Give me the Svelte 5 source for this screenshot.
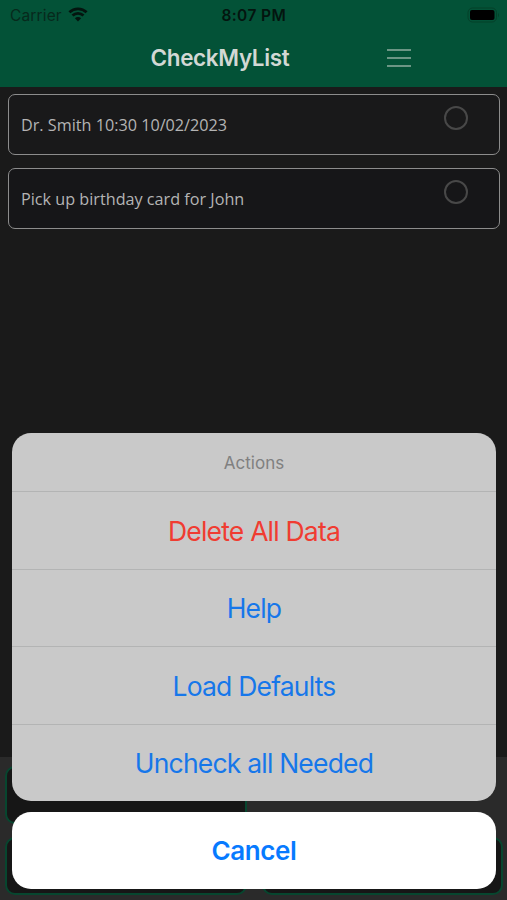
<script>
	let items = [
		{ text: 'Dr. Smith 10:30 10/02/2023', done: false },
		{ text: 'Pick up birthday card for John', done: false }
	];
	let actions = [
		{ label: 'Delete All Data', destructive: true },
		{ label: 'Help' },
		{ label: 'Load Defaults' },
		{ label: 'Uncheck all Needed' }
	];
	let open = true;

	function toggle(item) {
		item.done = !item.done;
		items = items;
	}
	function close() {
		open = false;
	}
</script>

<div class="phone">
	<header>
		<div class="status-bar">
			<div class="carrier">
				<span>Carrier</span>
				<svg class="wifi" viewBox="0 0 20 15" width="20" height="15">
					<path d="M1.4 5.3a12.4 12.4 0 0 1 17.2 0" />
					<path d="M4.5 8.5a8 8 0 0 1 11 0" />
					<path class="dot" d="M10 14.4 6.9 11.3a4.4 4.4 0 0 1 6.2 0z" />
				</svg>
			</div>
			<span class="time">8:07 PM</span>
			<svg class="battery" viewBox="0 0 34 16" width="34" height="16">
				<rect class="shell" x="1" y="1" width="28.5" height="14" rx="4.5" />
				<rect x="3" y="3" width="24.5" height="10" rx="2" />
				<path class="tip" d="M31 5.7q2 2.3 0 4.6z" />
			</svg>
		</div>
		<div class="nav-bar">
			<h1>CheckMyList</h1>
			<button class="menu" aria-label="Menu" on:click={() => (open = true)}>
				<i></i><i></i><i></i>
			</button>
		</div>
	</header>

	<ul role="list">
		{#each items as item}
			<li>
				<p>{item.text}</p>
				<button class="check" class:done={item.done} aria-label="Done" on:click={() => toggle(item)}
				></button>
			</li>
		{/each}
	</ul>

	<footer>
		<div class="pad"></div>
		<div></div>
		<div class="pad"></div>
		<div class="pad"></div>
	</footer>

	{#if open}
		<div class="sheet">
			<div class="actions">
				<h2>Actions</h2>
				{#each actions as action}
					<button class="action" class:destructive={action.destructive} on:click={close}>
						{action.label}
					</button>
				{/each}
			</div>
			<button class="cancel" on:click={close}>Cancel</button>
		</div>
	{/if}
</div>

<style>
	:global(body) {
		background-color: #1a1a1a;
	}
	button {
		border: none;
		background: none;
		padding: 0;
		font-family: inherit;
	}
	.phone {
		position: relative;
		display: flex;
		flex-direction: column;
		height: 900px;
		overflow: hidden;
		background-color: #1a1a1a;
		font-family: Inter, 'Liberation Sans', sans-serif;
	}
	header {
		height: 87px;
		background-color: #035237;
	}
	.status-bar {
		display: grid;
		grid-template-columns: 1fr auto 1fr;
		align-items: center;
		height: 29px;
		padding: 0 6.5px 0 10px;
		color: #04150f;
		font-size: 15.5px;
		line-height: 31px;
	}
	.carrier {
		display: flex;
		align-items: center;
		gap: 6px;
		color: #07291c;
		letter-spacing: 0.15px;
	}
	.wifi {
		margin-top: -2px;
		fill: none;
		stroke: #04150f;
		stroke-width: 2.8;
	}
	.wifi .dot {
		fill: #04150f;
		stroke: none;
	}
	.time {
		margin-left: -3px;
		font-weight: 600;
		font-size: 15.5px;
		letter-spacing: 0.4px;
	}
	.battery {
		justify-self: end;
		margin-top: -1px;
		fill: #000;
	}
	.battery .shell {
		fill: none;
		stroke: #044029;
	}
	.battery .tip {
		fill: #044029;
	}
	.nav-bar {
		display: flex;
		align-items: center;
		height: 57px;
		padding-left: 150.5px;
	}
	h1 {
		width: 140px;
		margin: 0;
		color: #d2d8d4;
		font-size: 22.5px;
		font-weight: 600;
		letter-spacing: -0.35px;
		white-space: nowrap;
	}
	.menu {
		display: grid;
		gap: 6px;
		width: 24px;
		margin: 0 0 0 96.5px;
	}
	.menu i {
		height: 2px;
		background-color: #6c9685;
	}
	ul {
		display: grid;
		gap: 13px;
		margin: 0;
		padding: 7px 7px 0 8px;
		list-style: none;
	}
	li {
		display: flex;
		justify-content: space-between;
		box-sizing: border-box;
		height: 61px;
		padding: 0 31px 0 12px;
		border: 1.5px solid #8c8c8c;
		border-radius: 7px;
		background-color: #19191a;
	}
	li:nth-child(even) {
		background-color: #161618;
	}
	p {
		margin: 0;
		color: #b4b4b4;
		font-family: 'Open Sans', 'Noto Sans', sans-serif;
		font-size: 16.2px;
		line-height: 60px;
	}
	.check {
		box-sizing: border-box;
		width: 24px;
		height: 24px;
		margin-top: 11px;
		border: 2px solid #484848;
		border-radius: 50%;
	}
	.check.done {
		background-color: #035237;
	}
	footer {
		display: grid;
		grid-template-columns: 1fr 1fr;
		grid-template-rows: 58px 58px;
		gap: 13px 15px;
		box-sizing: border-box;
		height: 143px;
		margin-top: auto;
		padding: 9px 4px 0 5px;
		background-color: #2a2a2a;
	}
	.pad {
		border: 2px solid #07462f;
		border-radius: 10px;
		background-color: #161616;
	}
	/* floats over the list and the footer */
	.sheet {
		position: absolute;
		right: 11px;
		bottom: 11px;
		left: 12px;
		display: grid;
		gap: 11px;
	}
	.actions {
		display: grid;
		grid-template-rows: 58px repeat(4, 77.5px);
		overflow: hidden;
		border-radius: 19px;
		background-color: #c9c9c9;
	}
	h2 {
		margin: 0;
		color: #808080;
		font-size: 17px;
		font-weight: 400;
		line-height: 60px;
		text-align: center;
	}
	.action {
		padding-top: 1px;
		border-top: 1.5px solid #b3b4b4;
		color: #1677ea;
		font-size: 26.5px;
		letter-spacing: -0.8px;
		line-height: 74px;
	}
	.action.destructive {
		color: #f03c31;
	}
	.cancel {
		height: 77px;
		border-radius: 19px;
		background-color: #fff;
		color: #077aff;
		font-size: 26px;
		font-weight: 600;
		letter-spacing: -0.4px;
	}
</style>
